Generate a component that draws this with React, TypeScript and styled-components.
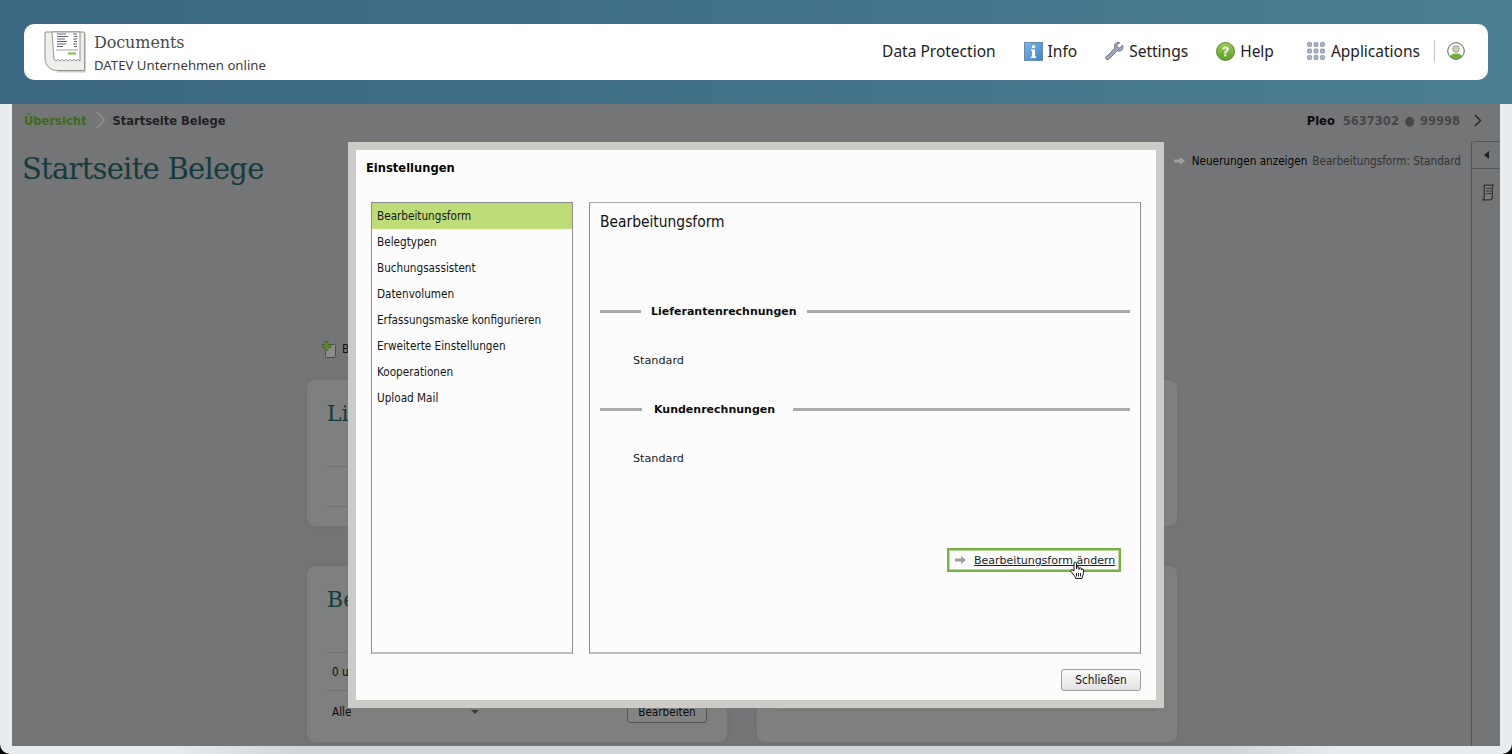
import React from "react";
import styled, { createGlobalStyle } from "styled-components";

const UI_FONT = `"DejaVu Sans Condensed", "Noto Sans", sans-serif`;

const Global = createGlobalStyle`
  html, body { margin: 0; padding: 0; background: #000; overflow: hidden; }
  * { box-sizing: border-box; }
  body { font-family: "Noto Sans", sans-serif; }
`;

const Page = styled.div`
  position: relative; width: 1512px; height: 754px; overflow: hidden;
  display: flex; flex-direction: column;
  border-radius: 0 0 10px 10px;
  background: linear-gradient(90deg, #e8ecef 0, #e8ecef 170px, #d2d5d8 300px, #d2d5d8 1230px, #e8ecef 1340px);
`;
const HeaderBand = styled.header`
  height: 104px; flex: none; padding: 24px 24px;
  background: linear-gradient(90deg, #3b6783 0%, #42718a 50%, #4b7f92 100%);
`;
const TopBar = styled.div`
  height: 56px; background: #fff; border-radius: 10px;
  display: flex; align-items: center; padding: 0 23px 0 20px;
`;
const Brand = styled.div`display: flex; align-items: center; gap: 8px;`;
const BrandText = styled.div`display: flex; flex-direction: column; margin-top: 4px;`;
const AppName = styled.div`font: 16px/20px "DejaVu Serif", serif; color: #4a4a4a; letter-spacing: -0.1px;`;
const AppSub = styled.div`font: 13.2px/20px "Noto Sans", sans-serif; color: #3c3c3c; margin-top: 2px;`;
const Nav = styled.nav`margin-left: auto; display: flex; align-items: center; margin-top: -2px;`;
const NavItem = styled.div<{ $ml: number; $gap?: number }>`
  display: flex; align-items: center; gap: ${p => p.$gap ?? 5}px; margin-left: ${p => p.$ml}px;
  font: 15.5px/22px "Noto Sans", sans-serif; color: #222;
`;
const NavDivider = styled.div`width: 1px; height: 22px; background: #c6c6c6; margin: 0 12px 0 14px;`;

const Body = styled.main`
  flex: none; height: 642px; margin: 0 12px; background: #747577;
  display: flex; flex-direction: column;
`;
const Crumbs = styled.div`
  height: 32px; flex: none; display: flex; align-items: center; padding: 0 18px 0 12px;
  font: bold 12.8px ${UI_FONT};
`;
const CrumbLink = styled.span`color: #3d6a1b;`;
const CrumbSep = styled.span`display: flex; margin: 0 6px 0 10px;`;
const CrumbCurrent = styled.span`color: #222;`;
const Client = styled.div`margin-left: auto; display: flex; align-items: center; color: #474747;`;
const ClientName = styled.span`color: #0c0c0c; margin-right: 8px;`;
const ClientNumber = styled.span`word-spacing: 1.5px;`;
const ClientNext = styled.span`display: flex; margin-left: 14px;`;
const Columns = styled.div`flex: 1; display: flex; min-height: 0;`;
const MainCol = styled.div`flex: 1; display: flex; flex-direction: column;`;
const TitleRow = styled.div`
  height: 60px; flex: none; display: flex; justify-content: space-between; padding: 0 10px 0 10px;
`;
const Title = styled.h1`
  margin: 15px 0 0; font: normal 29px/36px "DejaVu Serif", serif; letter-spacing: -0.75px; color: #163b3e;
`;
const Notice = styled.div`
  margin-top: 15px; height: 20px; display: flex; align-items: center;
  font: 11.65px/20px ${UI_FONT}; color: #050505;
`;
const NoticeArrow = styled.span`display: flex; margin-right: 6px;`;
const NoticeInfo = styled.span`color: #333; margin-left: 5px;`;
const Toolbar = styled.div`
  margin: 144px 0 0 309px; height: 18px; display: flex; align-items: center; gap: 5px;
  font: 11.65px ${UI_FONT}; color: #111; flex: none;
`;
const Cards = styled.div`
  margin: 22px 0 0 295px; display: grid; grid-template-columns: 420px 420px; column-gap: 30px;
  grid-template-rows: 146px 176px; row-gap: 40px;
`;
const Card = styled.section`
  background: #7e7f7f; border-radius: 8px; padding: 20px; display: flex; flex-direction: column;
  box-shadow: 0 0 8px rgba(0, 0, 0, 0.06);
`;
const CardTitle = styled.h2`
  margin: 0; height: 66px; flex: none; font: normal 22px/28px "DejaVu Serif", serif; color: #163b3e;
`;
const CardRow = styled.div<{ $h: number }>`
  height: ${p => p.$h}px; flex: none; border-top: 1px solid #6f7070; display: flex; align-items: center;
  padding: 0 0 0 5px; font: 11.65px ${UI_FONT}; color: #0b0b0b;
`;
const CardSelect = styled.span`flex: 1; display: flex; align-items: center; justify-content: space-between; padding-right: 148px;`;
const CardArrow = styled.i`width: 0; height: 0; border: 4px solid transparent; border-top: 4px solid #3b3b3b; border-bottom: 0;`;
const CardButton = styled.span`
  width: 80px; height: 22px; display: flex; align-items: center; justify-content: center;
  border: 1px solid #555; border-radius: 3px; background: #828282;
`;
const Side = styled.aside`
  width: 29px; flex: none; margin-top: 5px; border-left: 1px solid #545556;
  display: flex; flex-direction: column; align-items: center;
`;
const SideToggle = styled.div`
  width: 100%; height: 28px; display: flex; align-items: center; justify-content: center;
  border-top: 1px solid #545556; border-bottom: 1px solid #545556; border-top-left-radius: 4px;
`;
const SideTriangle = styled.i`width: 0; height: 0; border: 4px solid transparent; border-right: 5px solid #222; border-left: 0;`;
const SideIcon = styled.div`margin: 15px 0 0 3px; display: flex;`;

const Dialog = styled.div`
  position: absolute; left: 348px; top: 142px; width: 816px; height: 566px;
  border: 8px solid #cccbc8; background: #fcfcfc; display: flex; flex-direction: column; padding: 0 15px;
`;
const DialogTitle = styled.div`
  height: 52px; flex: none; padding: 9px 0 0; margin-left: -5px;
  font: bold 12.8px/18px ${UI_FONT}; color: #060606;
`;
const DialogPanels = styled.div`height: 452px; flex: none; display: flex; gap: 16px;`;
const MenuList = styled.ul`
  width: 202px; flex: none; margin: 0; padding: 0; list-style: none;
  border: 1px solid #8c8c8c; border-bottom: 2px solid #bdbdbd;
`;
const MenuItem = styled.li<{ $active?: boolean }>`
  height: 26px; padding: 0 0 0 5px; display: flex; align-items: center;
  font: 11.65px ${UI_FONT}; color: #151515;
  background: ${p => (p.$active ? "#bedc78" : "transparent")};
`;
const Panel = styled.div`
  flex: 1; border: 1px solid #8c8c8c; border-top-color: #aaa; border-bottom: 2px solid #bdbdbd;
  padding: 0 10px; display: flex; flex-direction: column; position: relative;
`;
const PanelTitle = styled.div`height: 101px; flex: none; padding-top: 8px; font: 15.4px/22px ${UI_FONT}; color: #111;`;
const Legend = styled.div<{ $start: number }>`
  display: grid; grid-template-columns: ${p => p.$start}px auto 1fr; align-items: center;
  height: 16px; flex: none;
`;
const LegendLine = styled.i`display: block; height: 3px; margin-bottom: 2px; background: #a9a9a9;`;
const LegendText = styled.span<{ $pr: number; $pl: number }>`
  padding: 0 ${p => p.$pr}px 0 ${p => p.$pl}px;
  font: bold 11px/16px "DejaVu Sans", sans-serif; color: #0d0d0d;
`;
const Value = styled.div`
  height: 82px; flex: none; padding: 33px 0 0 33px;
  font: 11.2px/16px "DejaVu Sans", sans-serif; color: #222;
`;
const ActionRow = styled.div`display: flex; justify-content: flex-end; margin-top: 48px; padding-right: 9px; position: relative;`;
const ActionLink = styled.a`
  width: 174px; height: 24px; display: flex; align-items: center; gap: 7px; padding-left: 5px;
  border: 2px solid #78b042; outline: 1px solid #b8d79a; outline-offset: -3px; white-space: nowrap;
  font: 11px "DejaVu Sans", sans-serif; color: #222; text-decoration: underline;
`;
const HandCursor = styled.svg`position: absolute; right: 45px; top: 13px;`;
const DialogFooter = styled.div`flex: 1; display: flex; justify-content: flex-end; padding-top: 15px;`;
const CloseButton = styled.button`
  width: 80px; height: 22px; padding: 0; border: 1px solid #9c9c9c; border-radius: 3px;
  background: linear-gradient(#fbfbfb, #e2e2e2); font: 11.8px ${UI_FONT}; color: #151515;
`;

const Arrow = ({ color }: { color: string }) => (
  <svg width="13" height="10" viewBox="0 0 13 10">
    <path d="M1 3.4h6V1l5 4-5 4V6.6H1z" fill={color} />
  </svg>
);

const DocLogo = () => (
  <svg width="42" height="42" viewBox="0 0 42 42">
    <path d="M2 1h37.5a1 1 0 0 1 1 1v37.5H13C6 39.5 1 34 1 27V2a1 1 0 0 1 1-1z" fill="#eeeeea" stroke="#8f8f8c" />
    <path d="M41.5 3v37.8H13" fill="none" stroke="#cfcfcc" strokeWidth="1.4" />
    <path d="M8 1h28v29l-2-1.6-2 1.6-2-1.6-2 1.6-2-1.6-2 1.6-2-1.6-2 1.6-2-1.6-2 1.6-2-1.6-2 1.6-2-1.6z" fill="#fff" stroke="#6f6f6f" strokeWidth=".7" />
    <path d="M13 3h9M13 5.5h11M13 8h8M13 10.500h10M13 13h9M13 15.500h6M29 3h4M30 5.500h3M29 8h4M30 10.500h3M29 13h4M30 15.500h3" stroke="#5f6278" strokeWidth="1" />
    <path d="M12 19h22" stroke="#9c9daa" strokeWidth="1" />
    <path d="M24 22.500h8" stroke="#7cc040" strokeWidth="2" />
  </svg>
);
const InfoIcon = () => (
  <svg width="19" height="19" viewBox="0 0 19 19">
    <defs><linearGradient id="ib" x1="0" y1="0" x2="1" y2="1"><stop offset="0" stopColor="#7fb8e6" /><stop offset="1" stopColor="#3d85c4" /></linearGradient></defs>
    <rect x=".5" y=".5" width="18" height="18" fill="url(#ib)" stroke="#6b8aa5" />
    <rect x="8" y="3.500" width="3" height="2.500" fill="#fff" />
    <path d="M7 7.500h4v7h1.200v1.500H6.800v-1.500H8V9H7z" fill="#fff" />
  </svg>
);
const WrenchIcon = () => (
  <svg width="19" height="19" viewBox="0 0 20 20">
    <path d="M18.500 3.500l-3.200 2.800-2.300-.6-.6-2.300L15.500.7C13 -.1 10.500 1 10 3.500c-.2 1.100 0 2.200.4 3L1.500 15.300c-1 1-1 2.200-.3 2.900.8.800 2 .7 3-.3l8.800-8.700c1 .4 2.100.5 3.200.2 2.300-.8 3.400-3.300 2.300-5.900z" fill="#a3a6b4" stroke="#63667a" strokeWidth=".9" strokeLinejoin="round" />
  </svg>
);
const HelpIcon = () => (
  <svg width="19" height="19" viewBox="0 0 19 19">
    <defs><linearGradient id="hb" x1="0" y1="0" x2="0" y2="1"><stop offset="0" stopColor="#9ccb53" /><stop offset="1" stopColor="#5f9d26" /></linearGradient></defs>
    <circle cx="9.500" cy="9.500" r="9" fill="url(#hb)" stroke="#5b8a2b" />
    <path d="M6.300 7.200c.2-1.800 1.500-2.700 3.300-2.700 1.900 0 3.200 1 3.200 2.600 0 2.300-2.500 2.200-2.500 4.300H8.300c0-2.800 2.200-2.700 2.200-4.200 0-.6-.4-1-1-1-.7 0-1 .4-1.100 1.200z" fill="#fff" />
    <rect x="8.300" y="12.400" width="2" height="2" fill="#fff" />
  </svg>
);
const AppsIcon = () => (
  <svg width="18" height="18" viewBox="0 0 18 18">
    {[0, 6.500, 13].flatMap(y =>
      [0, 6.500, 13].map(x => (
        <rect key={`${x}-${y}`} x={x + 0.5} y={y + 0.5} width="4" height="4" rx=".8" fill="#aab3c3" stroke="#7f8a9f" strokeWidth=".7" />
      ))
    )}
  </svg>
);
const UserIcon = () => (
  <svg width="18" height="18" viewBox="0 0 18 18">
    <clipPath id="uc"><circle cx="9" cy="9" r="8" /></clipPath>
    <circle cx="9" cy="9" r="8.300" fill="#fafafa" />
    <g clipPath="url(#uc)">
      <path d="M2 18c0-4.500 3-6.500 7-6.500s7 2 7 6.500z" fill="#6fb038" />
      <circle cx="9" cy="7" r="3.300" fill="#c8cdb8" stroke="#7e8a6e" strokeWidth=".6" />
    </g>
    <circle cx="9" cy="9" r="8.300" fill="none" stroke="#5c6b5c" strokeWidth="1" />
  </svg>
);
const ChevronThin = ({ w, h, color, sw }: { w: number; h: number; color: string; sw: number }) => (
  <svg width={w} height={h} viewBox={`0 0 ${w} ${h}`}>
    <path d={`M1 1L${w - 1.500} ${h / 2}L1 ${h - 1}`} fill="none" stroke={color} strokeWidth={sw} />
  </svg>
);
const AddDocIcon = () => (
  <svg width="16" height="17" viewBox="0 0 16 17">
    <rect x="4.500" y="3.500" width="10" height="13" rx="1" fill="#8a8c8c" stroke="#4e504f" />
    <path d="M4 0.500h3v3h3v3H7v3H4v-3H1v-3h3z" fill="#5d8632" stroke="#3b5a1e" strokeWidth=".6" />
  </svg>
);
const ScrollIcon = () => (
  <svg width="15" height="17" viewBox="0 0 14 16">
    <path d="M4 1h9c-1 0-1.500 1-1.500 2v9c0 2-1 3-2.500 3H2c1.300 0 2-1 2-3z" fill="#7c7c7c" stroke="#333" strokeWidth="1.200" />
    <path d="M5.500 4h5M5.500 6.500h5M5.500 9h5" stroke="#333" strokeWidth="1" />
  </svg>
);
const HandIcon = () => (
  <HandCursor width="15" height="19" viewBox="0 0 15 19">
    <path d="M4 10V2.500a1.200 1.200 0 0 1 2.500 0V8l.3-1.300a1.100 1.100 0 0 1 2.200.1V8.500l.3-1a1.100 1.100 0 0 1 2.100.2v1.300l.2-.5a1 1 0 0 1 1.900.4c0 3-.2 4.500-1 6.500l-.5 2H5.500l-.7-2L1 10.500c-.8-1 .2-2.200 1.300-1.600z" fill="#fff" stroke="#111" strokeWidth="1" strokeLinejoin="round" />
    <path d="M6.500 12v3.500M8.500 12v3.500M10.500 12v3.500" stroke="#111" strokeWidth=".9" />
  </HandCursor>
);

const menu = [
  "Bearbeitungsform", "Belegtypen", "Buchungsassistent", "Datenvolumen",
  "Erfassungsmaske konfigurieren", "Erweiterte Einstellungen", "Kooperationen", "Upload Mail",
];

export default function App() {
  return (
    <Page>
      <Global />
      <HeaderBand>
        <TopBar>
          <Brand>
            <DocLogo />
            <BrandText>
              <AppName>Documents</AppName>
              <AppSub>DATEV Unternehmen online</AppSub>
            </BrandText>
          </Brand>
          <Nav>
            <NavItem $ml={0}>Data Protection</NavItem>
            <NavItem $ml={28}><InfoIcon />Info</NavItem>
            <NavItem $ml={28}><WrenchIcon />Settings</NavItem>
            <NavItem $ml={28}><HelpIcon />Help</NavItem>
            <NavItem $ml={33} $gap={6}><AppsIcon />Applications</NavItem>
            <NavDivider />
            <UserIcon />
          </Nav>
        </TopBar>
      </HeaderBand>
      <Body>
        <Crumbs>
          <CrumbLink>Übersicht</CrumbLink>
          <CrumbSep><ChevronThin w={10} h={18} color="#8f8f8f" sw={1.6} /></CrumbSep>
          <CrumbCurrent>Startseite Belege</CrumbCurrent>
          <Client>
            <ClientName>Pleo</ClientName>
            <ClientNumber>5637302 ● 99998</ClientNumber>
            <ClientNext><ChevronThin w={8} h={13} color="#222" sw={1.4} /></ClientNext>
          </Client>
        </Crumbs>
        <Columns>
          <MainCol>
            <TitleRow>
              <Title>Startseite Belege</Title>
              <Notice>
                <NoticeArrow><Arrow color="#a0a0a0" /></NoticeArrow>
                Neuerungen anzeigen
                <NoticeInfo>Bearbeitungsform: Standard</NoticeInfo>
              </Notice>
            </TitleRow>
            <Toolbar><AddDocIcon />B</Toolbar>
            <Cards>
              <Card>
                <CardTitle>Lie</CardTitle>
                <CardRow $h={40} />
                <CardRow $h={20} />
              </Card>
              <Card />
              <Card>
                <CardTitle>Be</CardTitle>
                <CardRow $h={38}>0 u</CardRow>
                <CardRow $h={42}>
                  <CardSelect>Alle<CardArrow /></CardSelect>
                  <CardButton>Bearbeiten</CardButton>
                </CardRow>
              </Card>
              <Card>
                <CardTitle />
                <CardRow $h={58} />
                <CardRow $h={10} />
              </Card>
            </Cards>
          </MainCol>
          <Side>
            <SideToggle><SideTriangle /></SideToggle>
            <SideIcon><ScrollIcon /></SideIcon>
          </Side>
        </Columns>
      </Body>
      <Dialog>
        <DialogTitle>Einstellungen</DialogTitle>
        <DialogPanels>
          <MenuList>
            {menu.map((m, i) => (
              <MenuItem key={m} $active={i === 0}>{m}</MenuItem>
            ))}
          </MenuList>
          <Panel>
            <PanelTitle>Bearbeitungsform</PanelTitle>
            <Legend $start={41}>
              <LegendLine />
              <LegendText $pl={10} $pr={10}>Lieferantenrechnungen</LegendText>
              <LegendLine />
            </Legend>
            <Value>Standard</Value>
            <Legend $start={42}>
              <LegendLine />
              <LegendText $pl={12} $pr={18}>Kundenrechnungen</LegendText>
              <LegendLine />
            </Legend>
            <Value>Standard</Value>
            <ActionRow>
              <ActionLink>
                <Arrow color="#a0a0a0" />
                Bearbeitungsform ändern
              </ActionLink>
              <HandIcon />
            </ActionRow>
          </Panel>
        </DialogPanels>
        <DialogFooter>
          <CloseButton>Schließen</CloseButton>
        </DialogFooter>
      </Dialog>
    </Page>
  );
}
